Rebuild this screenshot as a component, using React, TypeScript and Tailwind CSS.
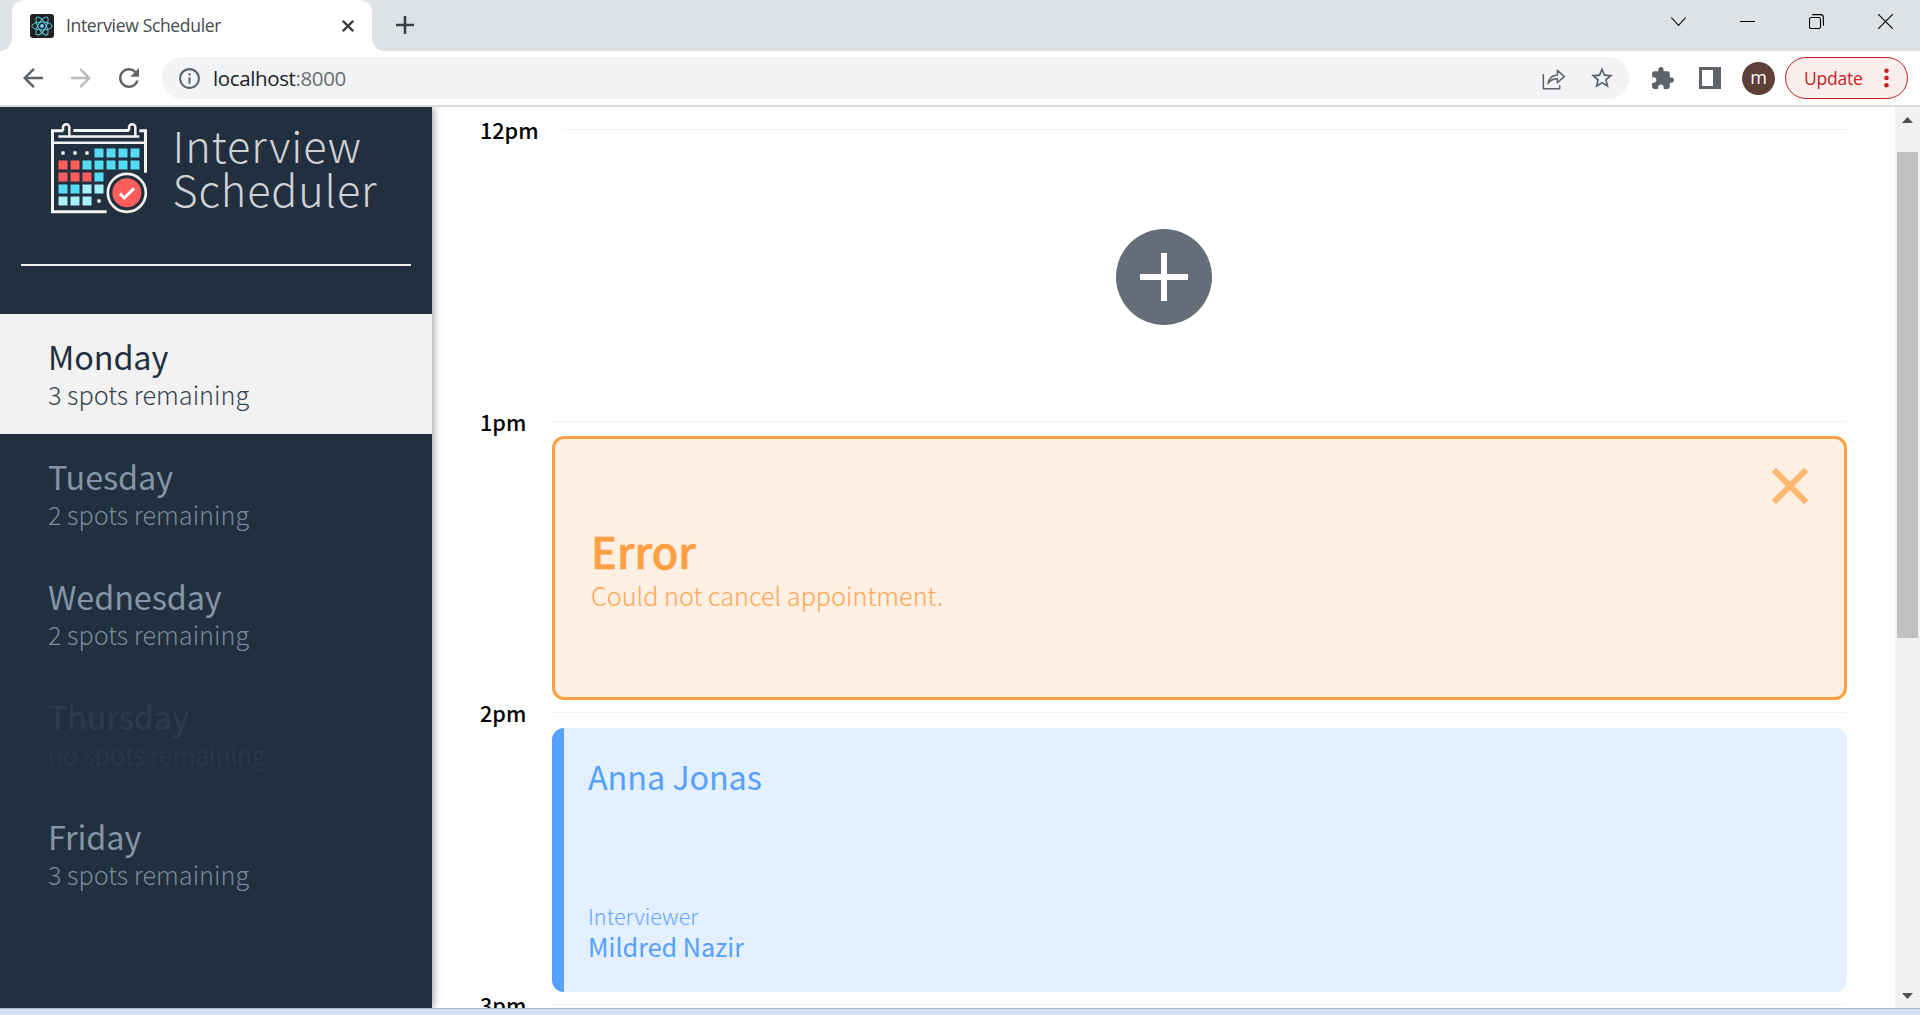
import type { ReactNode } from 'react';
import { MdArrowBack, MdArrowForward, MdExtension, MdInfoOutline, MdRefresh, MdStarBorder } from 'react-icons/md';

type Day = { name: string; spots: string; state: 'selected' | 'open' | 'full' };

const days: Day[] = [
  { name: 'Monday', spots: '3 spots remaining', state: 'selected' },
  { name: 'Tuesday', spots: '2 spots remaining', state: 'open' },
  { name: 'Wednesday', spots: '2 spots remaining', state: 'open' },
  { name: 'Thursday', spots: 'no spots remaining', state: 'full' },
  { name: 'Friday', spots: '3 spots remaining', state: 'open' },
];

const dayStyles = {
  selected: 'bg-[#f2f2f2] text-[#222f3e]',
  open: 'text-[#8395a7]',
  full: 'text-[#8395a7]/15',
};

function ReactLogo() {
  return (
    <svg className="h-6 w-6" viewBox="0 0 24 24" fill="none" stroke="#61dafb" strokeWidth="0.9">
      <rect width="24" height="24" rx="3" fill="#222222" stroke="none" />
      <ellipse cx="12" cy="12" rx="10.2" ry="3.9" />
      <ellipse cx="12" cy="12" rx="10.2" ry="3.9" transform="rotate(60 12 12)" />
      <ellipse cx="12" cy="12" rx="10.2" ry="3.9" transform="rotate(120 12 12)" />
      <circle cx="12" cy="12" r="1.9" fill="#61dafb" stroke="none" />
    </svg>
  );
}

function TabStrip() {
  return (
    <div className="flex h-[51px] shrink-0 bg-[#dee1e6]">
      <div className="flex w-3 items-end">
        <div className="h-3 w-3 bg-[radial-gradient(circle_at_0_0,#dee1e6_11.5px,#ffffff_12px)]" />
      </div>
      <div className="flex w-[360px] items-center rounded-t-xl bg-white pl-[18px]">
        <ReactLogo />
        <span className="mb-px ml-3 grow text-[17.5px] leading-6 tracking-[-0.33px] text-[#45494d]">Interview Scheduler</span>
        <svg className="mr-[18px] h-3 w-3" viewBox="0 0 12 12" stroke="#3c4043" strokeWidth="2.3">
          <path d="M0.8 0.8 11.2 11.2M11.2 0.8 0.8 11.2" />
        </svg>
      </div>
      <div className="flex w-3 items-end">
        <div className="h-3 w-3 bg-[radial-gradient(circle_at_100%_0,#dee1e6_11.5px,#ffffff_12px)]" />
      </div>
      <svg className="mt-4 ml-3 h-[18px] w-[18px]" viewBox="0 0 18 18" stroke="#3c4043" strokeWidth="2.6">
        <path d="M9 0V18M0 9H18" />
      </svg>
      <div className="mt-3.5 mr-[27px] ml-auto flex gap-[54px]">
        <svg className="h-[15px] w-[15px]" viewBox="0 0 15 15" fill="none" stroke="#111" strokeWidth="1.1">
          <path d="M0.4 3.5 7.5 11.4 14.6 3.5" />
        </svg>
        <svg className="h-[15px] w-[15px]" viewBox="0 0 15 15" stroke="#000">
          <path d="M0 7.5H15" />
        </svg>
        <svg className="h-[15px] w-[15px]" viewBox="0 0 15 15" fill="none" stroke="#000" strokeWidth="1.1">
          <rect x="0.5" y="3.5" width="11" height="11" rx="1.8" />
          <path d="M3.3 0.6H11.5Q14.4 0.6 14.4 3.5V11.7" />
        </svg>
        <svg className="h-[15px] w-[15px]" viewBox="0 0 15 15" stroke="#000" strokeWidth="1.1">
          <path d="M0 0 15 15M15 0 0 15" />
        </svg>
      </div>
    </div>
  );
}

function Toolbar() {
  return (
    <div className="flex h-14 shrink-0 items-center border-b-2 border-[#dadbdc] bg-white pl-[18px] text-[#5f6368]">
      <MdArrowBack className="h-[30px] w-[30px]" />
      <MdArrowForward className="ml-[18px] h-[30px] w-[30px] text-[#babcbe]" />
      <MdRefresh className="ml-[18px] h-[30px] w-[30px]" />
      <div className="ml-[18px] flex h-[42px] w-[1467px] items-center rounded-full bg-[#f1f3f4] pl-[15px]">
        <MdInfoOutline className="h-[25px] w-[25px]" />
        <span className="ml-[11px] text-[20.5px] leading-7 tracking-[-0.38px] text-[#202124]">
          localhost<span className="text-[#6a6e73]">:8000</span>
        </span>
        <svg className="mt-0.5 ml-auto h-[23px] w-[24px]" viewBox="0 0 72 69" fill="none" stroke="#5f6368" strokeWidth="4.5">
          <path d="M4 18V62H53V52" />
          <path d="M18 47C21 31 30 22 46 21V7L67 26 46 44V32C32 32 24 37 18 47Z" strokeLinejoin="round" />
        </svg>
        <MdStarBorder className="mr-[14px] ml-[23px] h-[26px] w-[26px]" />
      </div>
      <MdExtension className="ml-[21px] h-[25px] w-[25px]" />
      <svg className="ml-6 h-[22px] w-[22px]" viewBox="0 0 22 22">
        <path d="M0 0H22V22H0ZM3 3V19H14V3Z" fill="#5f6368" fillRule="evenodd" />
      </svg>
      <div className="ml-[21px] flex h-[33px] w-[33px] justify-center rounded-full bg-[#5d4037] text-[18px] leading-[31px] text-white">
        m
      </div>
      <div className="ml-[10px] flex h-[42px] w-[123px] items-center rounded-full border-[1.5px] border-[#c5221f] bg-[#faeeed] pl-[18px]">
        <span className="mb-px text-[17.5px] leading-6 tracking-[-0.25px] text-[#c5221f]">Update</span>
        <svg className="ml-[22px] h-5 w-[5px]" viewBox="0 0 5 20" fill="#c5221f">
          <circle cx="2.5" cy="2.7" r="2.3" />
          <circle cx="2.5" cy="10" r="2.3" />
          <circle cx="2.5" cy="17.3" r="2.3" />
        </svg>
      </div>
    </div>
  );
}

const cells: [number, number, string][] = [
  [3, 0, '#54ddf4'], [4, 0, '#54ddf4'], [5, 0, '#54ddf4'], [6, 0, '#54ddf4'],
  [0, 1, '#ff5c5c'], [1, 1, '#ff5c5c'], [2, 1, '#54ddf4'], [3, 1, '#54ddf4'], [4, 1, '#54ddf4'], [5, 1, '#54ddf4'], [6, 1, '#54ddf4'],
  [0, 2, '#ff5c5c'], [1, 2, '#ff5c5c'], [2, 2, '#ff5c5c'], [3, 2, '#54ddf4'],
  [0, 3, '#54ddf4'], [1, 3, '#54ddf4'], [2, 3, '#a6f1fb'], [3, 3, '#a6f1fb'],
  [0, 4, '#a6f1fb'], [1, 4, '#a6f1fb'], [2, 4, '#a6f1fb'],
];

const dots = [[189, 159], [225, 159], [261, 159], [297, 303]];

function CalendarLogo() {
  return (
    <svg className="h-[95px] w-[100px]" viewBox="150 60 300 285" fill="none" stroke="#f2f2f2" strokeWidth="9">
      <path d="M190 92H157.500V335H320" />
      <path d="M418 92H436.500V218" />
      <path d="M220 91.500H387" />
      <path d="M157 128H437M175 109.500H418" strokeWidth="7.500" />
      <path d="M189 92V82a9.500 9.500 0 0 1 19 0V108M387 92V82a9.500 9.500 0 0 1 19 0V108" strokeWidth="7.500" />
      {cells.map(([x, y, fill]) => (
        <rect key={`${x}-${y}`} x={175.5 + x * 36} y={145.5 + y * 36} width="27" height="27" fill={fill} stroke="none" />
      ))}
      {dots.map(([x, y]) => (
        <rect key={`${x}-${y}`} x={x - 5} y={y - 5} width="10" height="10" fill="#f2f2f2" stroke="none" />
      ))}
      <circle cx="380.500" cy="278.500" r="57" strokeWidth="8" />
      <circle cx="380.500" cy="278" r="43.500" fill="#ff5c5c" stroke="none" />
      <path d="M360 281 373 294 402 265" stroke="#fff" />
    </svg>
  );
}

function Sidebar() {
  return (
    <aside className="relative z-10 w-[432px] shrink-0 bg-[#222f3e] shadow-[1px_0_8px_rgba(0,0,0,0.42)]">
      <div className="flex h-[157px] pt-[13px] pl-[50px]">
        <CalendarLogo />
        <div className="mt-[3px] ml-[22.5px] text-[43.2px] leading-[43.7px] font-light tracking-[0.88px] text-[#cfd2d5]">
          Interview
          <br />
          Scheduler
        </div>
      </div>
      <hr className="mx-[21px] h-0.5 border-0 bg-[#f2f2f2]" />
      <nav className="mt-12">
        {days.map((d) => (
          <div key={d.name} className={`h-[120px] pt-6 pl-12 ${dayStyles[d.state]}`}>
            <div className="text-[32.4px] leading-9 tracking-[-0.1px]">{d.name}</div>
            <div className="text-[25.2px] leading-10 font-light opacity-90">{d.spots}</div>
          </div>
        ))}
      </nav>
    </aside>
  );
}

function Slot({ time, children }: { time: string; children?: ReactNode }) {
  return (
    <section>
      <header className="flex h-[25px] items-center gap-6">
        <h4 className="text-[21.6px] leading-[25px] font-medium text-black">{time}</h4>
        <div className="h-px grow bg-[#f2f2f2]" />
      </header>
      {children}
    </section>
  );
}

function Schedule() {
  return (
    <main className="grow overflow-hidden bg-white px-12 pt-[10px]">
      <Slot time="12pm">
        <div className="mt-[3px] flex h-[264px] items-center justify-center">
          <svg className="h-24 w-24" viewBox="0 0 96 96">
            <circle cx="48" cy="48" r="48" fill="#656d78" />
            <path d="M48 24V72M24 48H72" stroke="#fff" strokeWidth="6" />
          </svg>
        </div>
      </Slot>
      <Slot time="1pm">
        <div className="relative mt-0.5 ml-[72px] flex h-[264px] flex-col justify-center rounded-xl border-[3px] border-[#ff9f43] bg-[#fff0e3] pt-[6px] pl-9 text-[#ff9f43]">
          <div className="text-[43.2px] leading-[48px] font-medium [-webkit-text-stroke:0.7px_#ff9f43]">Error</div>
          <div className="text-[25.2px] leading-[42px] font-light opacity-90">Could not cancel appointment.</div>
          <svg className="absolute top-[29px] right-9 h-9 w-9" viewBox="0 0 36 36" stroke="#ffb871" strokeWidth="6">
            <path d="M1.800 1.800 34.200 34.200M34.200 1.800 1.800 34.200" />
          </svg>
        </div>
      </Slot>
      <Slot time="2pm">
        <div className="mt-[3px] ml-[72px] flex h-[264px] flex-col justify-between rounded-xl border-l-[12px] border-[#54a0ff] bg-[#e4f0ff] pt-[30px] pb-[30px] pl-6 text-[#54a0ff]">
          <div className="text-[32.4px] leading-9 tracking-[-0.1px]">Anna Jonas</div>
          <div>
            <div className="text-[21.6px] leading-[30px] font-light opacity-90">Interviewer</div>
            <div className="text-[25.2px] leading-[31px]">Mildred Nazir</div>
          </div>
        </div>
      </Slot>
      <Slot time="3pm" />
    </main>
  );
}

function Scrollbar() {
  return (
    <div className="flex w-[25px] shrink-0 flex-col items-center bg-[#f1f1f1] pt-[10px] pb-[9px]">
      <svg className="h-1.5 w-[11px]" viewBox="0 0 11 6" fill="#505050">
        <path d="M0 6 5.500 0 11 6Z" />
      </svg>
      <div className="mt-[29px] h-[486px] w-[21px] bg-[#c1c1c1]" />
      <svg className="mt-auto h-1.5 w-[11px]" viewBox="0 0 11 6" fill="#505050">
        <path d="M0 0 5.500 6 11 0Z" />
      </svg>
    </div>
  );
}

export default function App() {
  return (
    <div className="flex h-[1015px] w-[1920px] flex-col overflow-hidden bg-[#d6e0f5] font-['Open_Sans',sans-serif]">
      <TabStrip />
      <Toolbar />
      <div className="flex h-[901px] shrink-0 overflow-hidden font-['Noto_Sans_CJK_JP',sans-serif]">
        <Sidebar />
        <Schedule />
        <Scrollbar />
      </div>
      <div className="h-px shrink-0 bg-[#a9b0be]" />
    </div>
  );
}
